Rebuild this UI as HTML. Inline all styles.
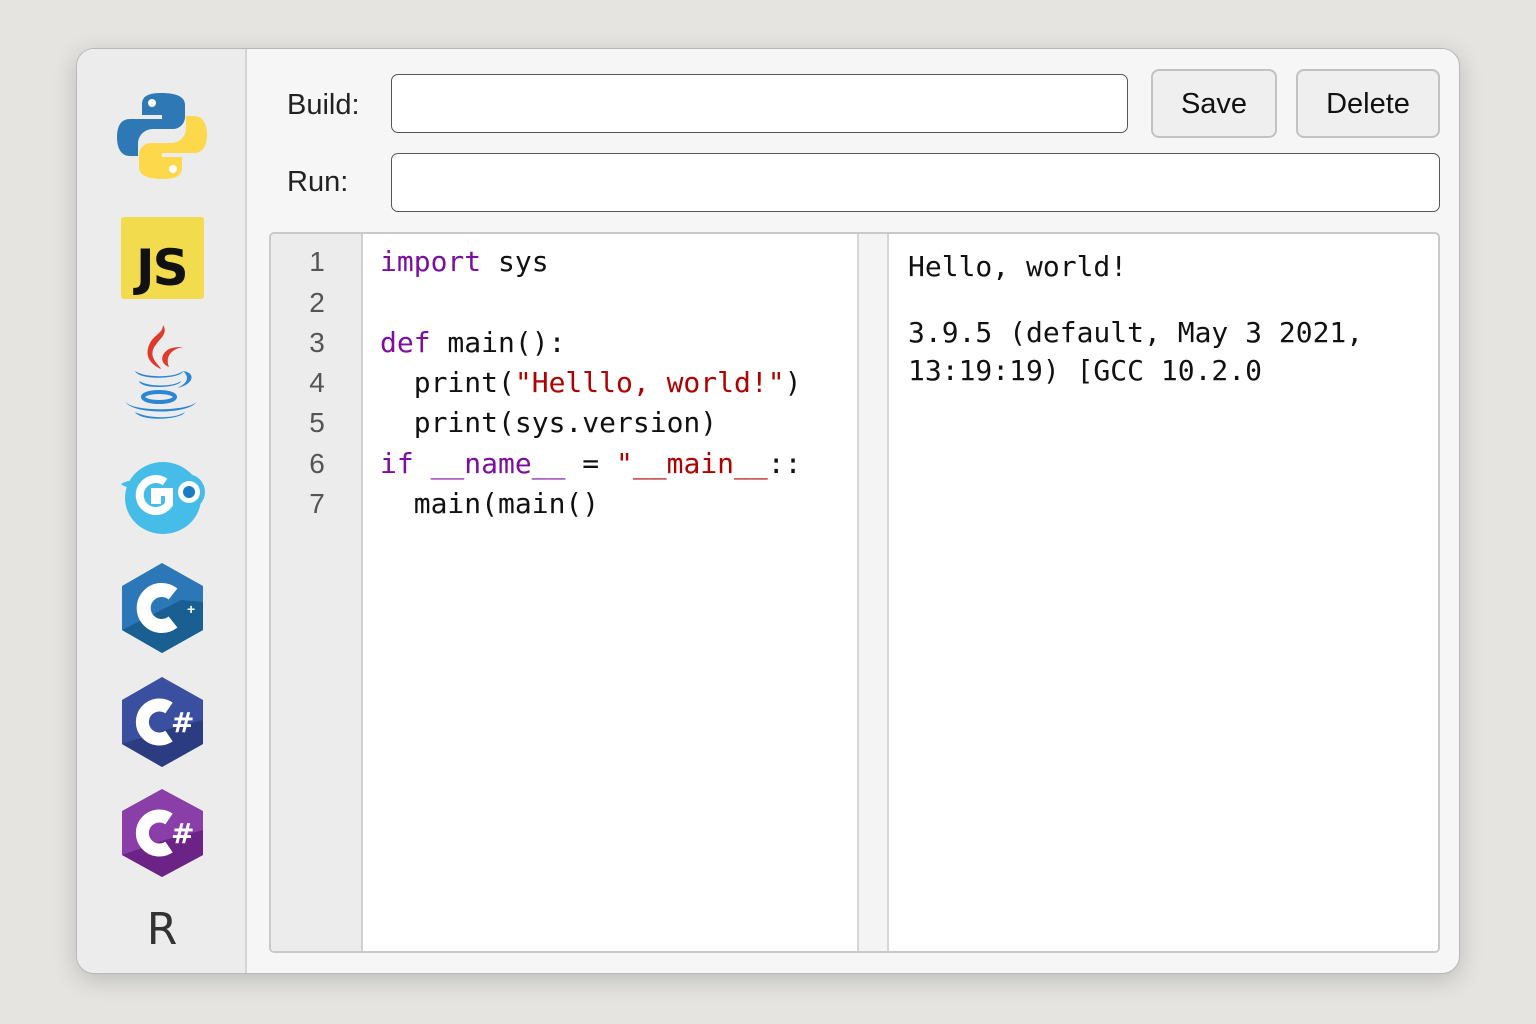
<!DOCTYPE html>
<html><head><meta charset="utf-8"><style>
*{margin:0;padding:0;box-sizing:border-box}
body{width:1536px;height:1024px;background:#e5e4e1;position:relative;overflow:hidden;font-family:"Liberation Sans","DejaVu Sans",sans-serif}
.win{position:absolute;left:76px;top:48px;width:1384px;height:926px;background:#f6f6f6;border:1px solid #b9b9b9;border-radius:18px;overflow:hidden;box-shadow:0 6px 24px rgba(0,0,0,.18)}
.side{position:absolute;left:0;top:0;width:170px;height:100%;background:#ececec;border-right:2px solid #d4d4d4}
.abs{position:absolute}
.lbl{font-size:29px;color:#222}
.inp{position:absolute;background:#fff;border:1.5px solid #555;border-radius:7px}
.btn{position:absolute;background:#efefef;border:2px solid #c2c2c2;border-radius:8px;font-size:29px;color:#111;text-align:center;line-height:66px}
.ed{position:absolute;left:192px;top:183px;width:1171px;height:721px;border:2px solid #c9c9c9;border-radius:5px;background:#fff;overflow:hidden}
.mono{font-family:"DejaVu Sans Mono","Liberation Mono",monospace;font-size:28px;color:#111;white-space:pre;position:absolute;line-height:34px}
.num{position:absolute;width:92px;text-align:center;font-size:28px;color:#555;line-height:34px;left:0}
.k{color:#7a0fa0}.s{color:#b00000}
</style></head><body>
<div class="win">
 <div class="side">
  <!-- python -->
  <svg class="abs" style="left:39px;top:42px" width="92" height="90" viewBox="0 0 92 90">
   <path d="M45 2C28 2 26 8 26 14v10h20v4H14C5 28 1 35 1 46s4 19 13 19h8V53c0-9 7-15 15-15h20c7 0 12-6 12-12V14C69 6 61 2 45 2z" fill="#2f78b6"/>
   <circle cx="36" cy="12" r="4" fill="#fff"/>
   <path d="M47 88c17 0 19-6 19-12V66H46v-4h32c9 0 13-7 13-18s-4-19-13-19h-8v12c0 9-7 15-15 15H35c-7 0-12 6-12 12v12c0 8 8 12 24 12z" fill="#fcd84a"/>
   <circle cx="57" cy="78" r="4" fill="#fff"/>
  </svg>
  <!-- JS -->
  <div class="abs" style="left:44px;top:168px;width:83px;height:82px;background:#f2dc4d;border-radius:3px"></div>
  <div class="abs" style="left:59px;top:190px;font:bold 50px 'DejaVu Sans',sans-serif;color:#111;letter-spacing:-2px">JS</div>
  <!-- java -->
  <svg class="abs" style="left:44px;top:276px" width="78" height="100" viewBox="0 0 78 100">
   <path d="M42 0c8 12-14 18-10 32 2 6 7 9 8 12-9-4-18-12-11-26 4-8 13-10 13-18z" fill="#e03a2d"/>
   <path d="M62 22c-12 2-18 10-14 20-8-3-10-12 0-18 5-2 10-2 14-2z" fill="#e03a2d"/>
   <path d="M14 46c10 7 40 7 48 0-1 8-44 10-48 0z" fill="#2b86d6"/>
   <path d="M18 56c10 6 34 6 42 0-1 7-40 9-42 0z" fill="#2b86d6"/>
   <path d="M62 46c14 2 10 14-6 17 12-5 12-12 6-17z" fill="#2b86d6"/>
   <ellipse cx="38" cy="72" rx="16" ry="5" fill="none" stroke="#2b86d6" stroke-width="4"/>
   <path d="M4 76c6 14 66 14 72 0-4 10-66 12-72 0z" fill="#2b86d6"/>
   <path d="M14 87c14 7 40 7 50 0-4 8-44 10-50 0z" fill="#2b86d6"/>
  </svg>
  <!-- go -->
  <svg class="abs" style="left:42px;top:405px" width="90" height="82" viewBox="0 0 90 82">
   <ellipse cx="44" cy="44" rx="38" ry="36" fill="#45bde8"/>
   <path d="M2 30c6-4 14-4 20-2v6C14 34 6 34 2 30z" fill="#45bde8"/>
   <circle cx="68" cy="38" r="18" fill="#45bde8"/>
   <path d="M46 28a16 16 0 1 0 4 22v-12H36v8h6" fill="none" stroke="#fff" stroke-width="8"/>
   <circle cx="70" cy="38" r="11" fill="#fff"/>
   <circle cx="70" cy="38" r="6" fill="#1a7cc4"/>
  </svg>
  <!-- c++ -->
  <svg class="abs" style="left:44px;top:513px" width="83" height="92" viewBox="0 0 83 92">
   <polygon points="41,1 82,24 82,68 41,91 1,68 1,24" fill="#2c77b8"/>
   <polygon points="82,40 82,68 41,91 1,68 60,38" fill="#195f92"/>
   <path d="M52 32a18 18 0 1 0 0 28" fill="none" stroke="#fff" stroke-width="14"/>
   <text x="66" y="52" font-size="14" font-weight="bold" fill="#fff" font-family="Liberation Sans">+</text>
  </svg>
  <!-- c# -->
  <svg class="abs" style="left:44px;top:627px" width="83" height="92" viewBox="0 0 83 92">
   <polygon points="41,1 82,24 82,68 41,91 1,68 1,24" fill="#3b4fa0"/>
   <polygon points="82,44 82,68 41,91 1,68 44,54" fill="#2c3c80"/>
   <path d="M48 32a17 17 0 1 0 0 28" fill="none" stroke="#fff" stroke-width="13"/>
   <text x="50" y="56" font-size="28" font-weight="bold" fill="#fff" font-family="DejaVu Sans">#</text>
  </svg>
  <!-- c# purple -->
  <svg class="abs" style="left:44px;top:739px" width="83" height="90" viewBox="0 0 83 90">
   <polygon points="41,1 82,23 82,67 41,89 1,67 1,23" fill="#8a3fa8"/>
   <polygon points="82,42 82,67 41,89 1,67 44,52" fill="#6c2386"/>
   <path d="M48 31a17 17 0 1 0 0 28" fill="none" stroke="#fff" stroke-width="13"/>
   <text x="50" y="55" font-size="28" font-weight="bold" fill="#fff" font-family="DejaVu Sans">#</text>
  </svg>
  <div class="abs" style="left:0;width:170px;text-align:center;top:855px;font:44px 'DejaVu Sans',sans-serif;color:#333">R</div>
 </div>
 <div class="abs lbl" style="left:210px;top:40px">Build:</div>
 <div class="abs lbl" style="left:210px;top:117px">Run:</div>
 <div class="inp" style="left:314px;top:25px;width:737px;height:59px"></div>
 <div class="btn" style="left:1074px;top:20px;width:126px;height:69px">Save</div>
 <div class="btn" style="left:1219px;top:20px;width:144px;height:69px">Delete</div>
 <div class="inp" style="left:314px;top:104px;width:1049px;height:59px"></div>
 <div class="ed">
  <div class="abs" style="left:0;top:0;width:92px;height:100%;background:#ececec;border-right:2px solid #d0d0d0"></div>
  <div class="abs" style="left:586px;top:0;width:32px;height:100%;background:#f4f4f4;border-left:2px solid #d6d6d6;border-right:2px solid #d6d6d6"></div>
  <div class="num" style="top:11px">1</div>
  <div class="num" style="top:52px">2</div>
  <div class="num" style="top:92px">3</div>
  <div class="num" style="top:132px">4</div>
  <div class="num" style="top:172px">5</div>
  <div class="num" style="top:213px">6</div>
  <div class="num" style="top:253px">7</div>
  <div class="mono" style="left:109px;top:11px"><span class="k">import</span> sys</div>
  <div class="mono" style="left:109px;top:92px"><span class="k">def</span> main():</div>
  <div class="mono" style="left:109px;top:132px">  print(<span class="s">"Helllo, world!"</span>)</div>
  <div class="mono" style="left:109px;top:172px">  print(sys.version)</div>
  <div class="mono" style="left:109px;top:213px"><span class="k">if __name__</span> = <span class="s">"__main__</span>::</div>
  <div class="mono" style="left:109px;top:253px">  main(main()</div>
  <div class="mono" style="left:637px;top:16px">Hello, world!</div>
  <div class="mono" style="left:637px;top:82px">3.9.5 (default, May 3 2021,</div>
  <div class="mono" style="left:637px;top:120px">13:19:19) [GCC 10.2.0</div>
 </div>
</div>
</body></html>
